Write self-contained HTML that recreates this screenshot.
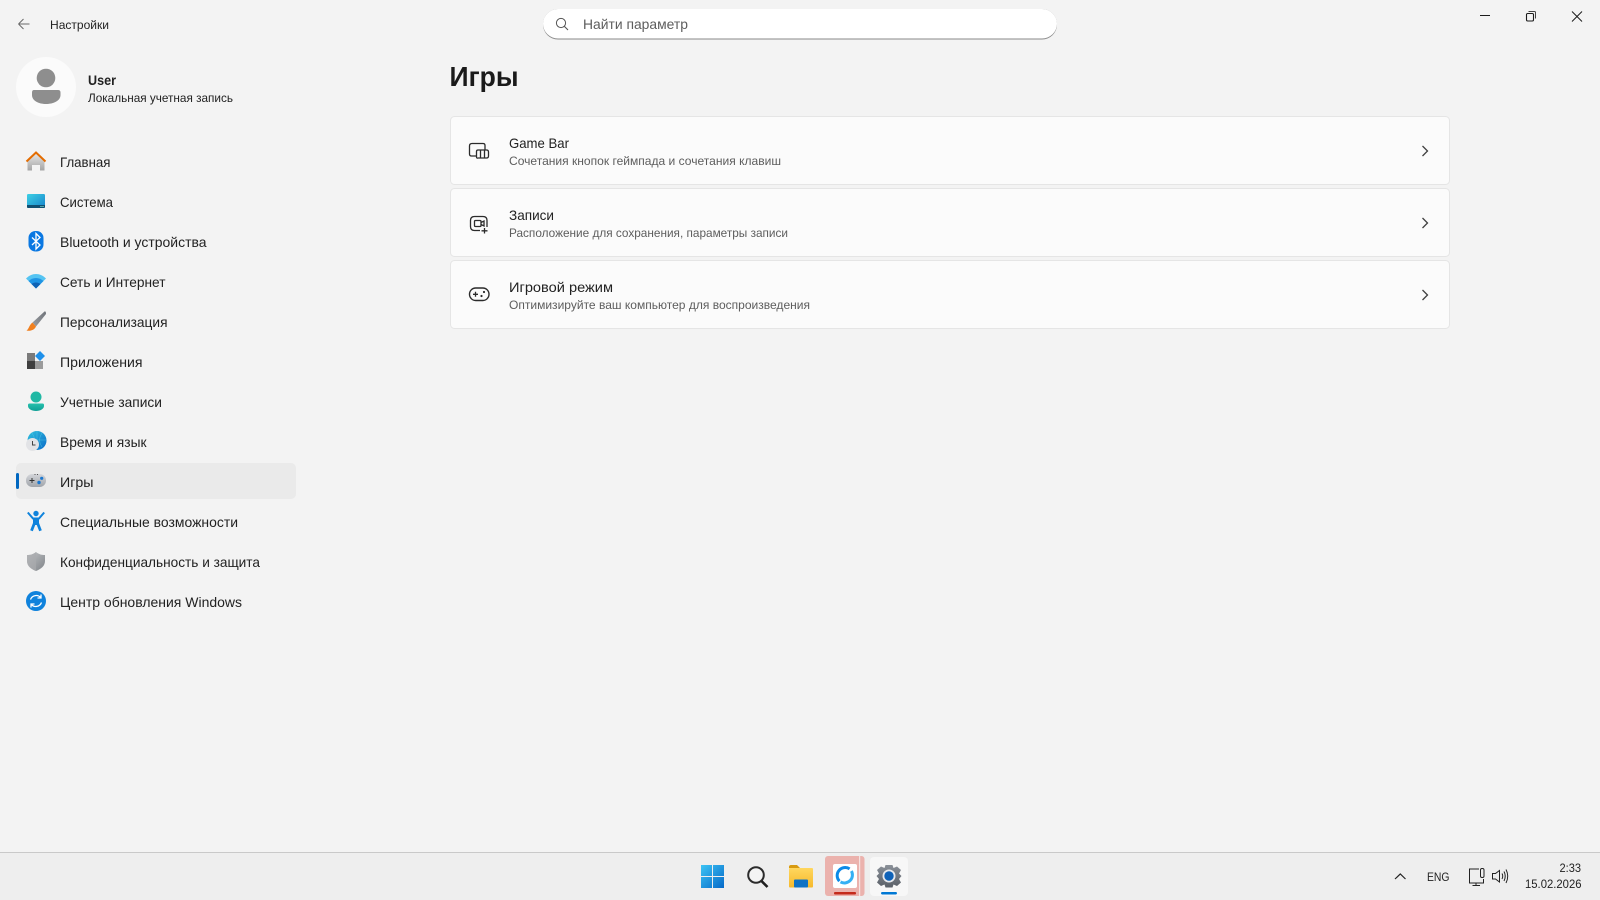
<!DOCTYPE html>
<html lang="ru"><head><meta charset="utf-8"><title>Параметры</title>
<style>html,body{margin:0;padding:0;background:#f3f3f3;overflow:hidden}svg{display:block}text{font-family:"Liberation Sans",sans-serif;fill:#222}.n{font-size:14px}.s{font-size:12px}.g{fill:#5d5d5d}</style></head>
<body>
<svg width="1600" height="900" viewBox="0 0 1600 900" xmlns="http://www.w3.org/2000/svg">
<defs>
<linearGradient id="wall" x1="0" y1="0" x2="0" y2="1"><stop offset="0" stop-color="#e8e8e8"/><stop offset="1" stop-color="#a4a4a4"/></linearGradient>
<linearGradient id="sys" x1="0" y1="0" x2="1" y2="1"><stop offset="0" stop-color="#3dd0e4"/><stop offset="1" stop-color="#1684cc"/></linearGradient>
<linearGradient id="tl" x1="0" y1="0" x2="0" y2="1"><stop offset="0" stop-color="#26c0ac"/><stop offset="1" stop-color="#0f9f96"/></linearGradient>
<linearGradient id="gl" x1="0" y1="0" x2="1" y2="1"><stop offset="0" stop-color="#30c0de"/><stop offset="1" stop-color="#0a6cc8"/></linearGradient>
<linearGradient id="gp" x1="0" y1="0" x2="0" y2="1"><stop offset="0" stop-color="#d4d6da"/><stop offset="1" stop-color="#a0a4aa"/></linearGradient>
<linearGradient id="sh" x1="0" y1="0" x2="1" y2="1"><stop offset="0" stop-color="#c4c6c8"/><stop offset="1" stop-color="#7f8388"/></linearGradient>
<linearGradient id="win" x1="0" y1="0" x2="1" y2="1"><stop offset="0" stop-color="#3cc4f4"/><stop offset="1" stop-color="#0669c8"/></linearGradient>
<linearGradient id="fold" x1="0" y1="0" x2="0" y2="1"><stop offset="0" stop-color="#ffd75e"/><stop offset="1" stop-color="#f6b92c"/></linearGradient>
<linearGradient id="gear" x1="0" y1="0" x2="0" y2="1"><stop offset="0" stop-color="#8a9098"/><stop offset="1" stop-color="#5a6068"/></linearGradient>
<linearGradient id="brush" x1="0" y1="1" x2="1" y2="0"><stop offset="0" stop-color="#9a9da2"/><stop offset="1" stop-color="#6f7379"/></linearGradient>
</defs>
<rect width="1600" height="900" fill="#f3f3f3"/>

<!-- title bar -->
<path d="M18.500 24H29.500M18.500 24L23.500 19M18.500 24L23.500 29" fill="none" stroke="#6a6a6a" stroke-width="1"/>
<text class="s" x="50" y="29" textLength="59" lengthAdjust="spacingAndGlyphs">Настройки</text>
<path d="M1480 15.500H1490" stroke="#1b1b1b" stroke-width="1"/>
<rect x="1526.500" y="13.500" width="7" height="7.500" rx="1.200" fill="none" stroke="#1b1b1b" stroke-width="1.100"/>
<path d="M1528.500 11.500H1534.500Q1535.500 11.500 1535.500 12.500V18.500" fill="none" stroke="#444" stroke-width="1"/>
<path d="M1572 11.500L1582 21.500M1582 11.500L1572 21.500" stroke="#1b1b1b" stroke-width="1"/>

<!-- search -->
<rect x="543" y="9" width="514" height="30.500" rx="15" fill="#8a8a8a"/>
<rect x="543" y="9" width="514" height="29.500" rx="15" fill="#fff"/>
<circle cx="561" cy="23" r="4.600" fill="none" stroke="#555" stroke-width="1"/>
<path d="M564.400 26.400L568 30" stroke="#555" stroke-width="1.100"/>
<text class="n g" x="583" y="29" textLength="105" lengthAdjust="spacingAndGlyphs">Найти параметр</text>

<!-- user -->
<circle cx="46" cy="87" r="30" fill="#fbfbfb"/>
<circle cx="46" cy="78" r="9.300" fill="#8e8e8e"/>
<path d="M34 90H58Q60.500 90 60.500 92.500V95C60.500 101 53 104 46 104C39 104 32 101 32 95V92.500Q32 90 34 90Z" fill="#8e8e8e"/>
<text class="n" x="88" y="85" font-weight="700" textLength="28" lengthAdjust="spacingAndGlyphs" style="font-size:13.500px">User</text>
<text class="s" x="88" y="102" textLength="145" lengthAdjust="spacingAndGlyphs">Локальная учетная запись</text>

<!-- selected -->
<rect x="16" y="463" width="280" height="36" rx="5" fill="#eaeaea"/>
<rect x="16" y="473" width="3" height="16" rx="1.500" fill="#0067c0"/>

<!-- nav labels -->
<text class="n" x="60" y="167" textLength="50.500" lengthAdjust="spacingAndGlyphs">Главная</text>
<text class="n" x="60" y="207" textLength="53" lengthAdjust="spacingAndGlyphs">Система</text>
<text class="n" x="60" y="247" textLength="146.500" lengthAdjust="spacingAndGlyphs">Bluetooth и устройства</text>
<text class="n" x="60" y="287" textLength="105.500" lengthAdjust="spacingAndGlyphs">Сеть и Интернет</text>
<text class="n" x="60" y="327" textLength="107.500" lengthAdjust="spacingAndGlyphs">Персонализация</text>
<text class="n" x="60" y="367" textLength="82.500" lengthAdjust="spacingAndGlyphs">Приложения</text>
<text class="n" x="60" y="407" textLength="102" lengthAdjust="spacingAndGlyphs">Учетные записи</text>
<text class="n" x="60" y="447" textLength="86.500" lengthAdjust="spacingAndGlyphs">Время и язык</text>
<text class="n" x="60" y="487" textLength="33.500" lengthAdjust="spacingAndGlyphs">Игры</text>
<text class="n" x="60" y="527" textLength="178" lengthAdjust="spacingAndGlyphs">Специальные возможности</text>
<text class="n" x="60" y="567" textLength="200" lengthAdjust="spacingAndGlyphs">Конфиденциальность и защита</text>
<text class="n" x="60" y="607" textLength="182" lengthAdjust="spacingAndGlyphs">Центр обновления Windows</text>

<!-- home -->
<path d="M27.500 161L36 153L44.500 161V170.500H40V165H32V170.500H27.500Z" fill="url(#wall)"/>
<path d="M26.500 161.500L36 152.500L45.500 161.500" fill="none" stroke="#e46c00" stroke-width="2"/>
<!-- system -->
<rect x="27" y="194" width="18" height="14" rx="1.200" fill="url(#sys)"/>
<path d="M27 205H45V207Q45 208 44 208H28Q27 208 27 207Z" fill="#104f72"/>
<rect x="40.500" y="206" width="1" height="1" fill="#9fd"/><rect x="42.500" y="206" width="1" height="1" fill="#9fd"/>
<!-- bluetooth -->
<rect x="28.500" y="231" width="15" height="20.500" rx="7" fill="#0a78e2"/>
<path d="M32 237.500L40 245L36 249V233.500L40 237.500L32 245" fill="none" stroke="#fff" stroke-width="1.300"/>
<!-- wifi -->
<path d="M26 278.500C32 272.500 40 272.500 46 278.500L36 288.500Z" fill="#55c4f2"/>
<path d="M28.500 281C33 277 39 277 43.500 281L36 288.500Z" fill="#1f94e4"/>
<path d="M31.500 284C34 282 38 282 40.500 284L36 288.500Z" fill="#0f62b4"/>
<!-- brush -->
<path d="M44.500 311.500L32.500 322.500L36 326.500L46 314Q46 311 44.500 311.500Z" fill="url(#brush)"/>
<path d="M32.500 322.500L36 326.500C34.500 330 30 331.500 26.500 330.500C29 329 29 325 32.500 322.500Z" fill="#f08020"/>
<!-- apps -->
<rect x="27" y="353" width="8" height="8" fill="#7a7a7a"/>
<rect x="27" y="361" width="8" height="8" fill="#3f3f3f"/>
<rect x="35" y="361" width="8" height="8" fill="#9b9b9b"/>
<path d="M40 351L45 356L40 361L35 356Z" fill="#1e90ea"/>
<!-- accounts -->
<circle cx="36" cy="397" r="5.500" fill="#20b8a4"/>
<path d="M29.500 403.500H42.500Q44 403.500 44 405V406C44 409 40 411 36 411C32 411 28 409 28 406V405Q28 403.500 29.500 403.500Z" fill="url(#tl)"/>
<!-- time -->
<circle cx="37" cy="440.500" r="9.500" fill="url(#gl)"/>
<path d="M37 431V449M28 440H46M32 433Q37 440 32 447M42 433Q37 440 42 447" fill="none" stroke="#5fd0ea" stroke-width=".5" opacity=".7"/>
<circle cx="32.500" cy="444.500" r="6.500" fill="#e2e3e6"/>
<path d="M32.500 441V445H35.500" fill="none" stroke="#444" stroke-width="1"/>
<!-- games -->
<rect x="26" y="474" width="20" height="13" rx="6.300" fill="url(#gp)"/>
<path d="M29.500 480.500H34.500M32 478V483" stroke="#333" stroke-width="1"/>
<circle cx="41.700" cy="478.300" r="1.600" fill="#1b78d0"/><circle cx="39" cy="482.500" r="1.700" fill="#1b78d0"/>
<path d="M34.500 474.500h1M37 474.500h1" stroke="#555" stroke-width="1"/>
<!-- accessibility -->
<circle cx="36" cy="513.500" r="2.700" fill="#0f83dc"/>
<path d="M27.800 512.500L33 518.500H39L44.200 512.500" fill="none" stroke="#0f83dc" stroke-width="2"/>
<rect x="33" y="518" width="6" height="7" fill="#0f83dc"/>
<path d="M34.300 523.500L31.500 530.800M37.700 523.500L40.500 530.800" fill="none" stroke="#0f83dc" stroke-width="2.800"/>
<!-- shield -->
<path d="M36 552C39 554.500 42 555 45 555V561C45 566 41 569 36 571C31 569 27 566 27 561V555C30 555 33 554.500 36 552Z" fill="url(#sh)"/>
<path d="M36 552C33 554.500 30 555 27 555V561C27 566 31 569 36 571Z" fill="#a9abae" opacity=".7"/>
<!-- update -->
<circle cx="36" cy="601" r="10" fill="#0f82dc"/>
<path d="M30.500 599.500A6 6 0 0 1 41 598M41 594.500V598H37.500M41.500 602.500A6 6 0 0 1 31 604M31 607.500V604H34.500" fill="none" stroke="#fff" stroke-width="1.300"/>

<!-- heading -->
<text x="449.500" y="86" font-size="28" font-weight="700" textLength="69" lengthAdjust="spacingAndGlyphs" style="fill:#1a1a1a">Игры</text>

<!-- cards -->
<rect x="450.500" y="116.500" width="999" height="68" rx="4" fill="#fbfbfb" stroke="#e5e5e5"/>
<rect x="450.500" y="188.500" width="999" height="68" rx="4" fill="#fbfbfb" stroke="#e5e5e5"/>
<rect x="450.500" y="260.500" width="999" height="68" rx="4" fill="#fbfbfb" stroke="#e5e5e5"/>
<text class="n" x="509" y="148" textLength="60" lengthAdjust="spacingAndGlyphs">Game Bar</text>
<text class="s g" x="509" y="165" textLength="272" lengthAdjust="spacingAndGlyphs">Сочетания кнопок геймпада и сочетания клавиш</text>
<text class="n" x="509" y="220" textLength="45" lengthAdjust="spacingAndGlyphs">Записи</text>
<text class="s g" x="509" y="237" textLength="279" lengthAdjust="spacingAndGlyphs">Расположение для сохранения, параметры записи</text>
<text class="n" x="509" y="292" textLength="104" lengthAdjust="spacingAndGlyphs">Игровой режим</text>
<text class="s g" x="509" y="309" textLength="301" lengthAdjust="spacingAndGlyphs">Оптимизируйте ваш компьютер для воспроизведения</text>

<g fill="none" stroke="#2b2b2b" stroke-width="1.300">
<path d="M476 156H471.500Q469.500 156 469.500 154V146Q469.500 143.500 472 143.500H483Q485 143.500 485 145.500V149.500"/>
<path d="M476.500 151.500Q476.500 150 478 150H486.500Q488.500 150 488.500 152V156Q488.500 158 486.500 158H478Q476.500 158.500 476.500 157ZM480.500 150V158.500M484.500 150V158"/>
<path d="M480 230.500H474.500Q470.500 230.500 470.500 226.500V220.500Q470.500 216.500 474.500 216.500H483Q487 216.500 487 220.500V227"/>
<rect x="474.500" y="220.500" width="6.500" height="6" rx="1"/>
<path d="M481 222.500L484 221V226L481 224.500M484.500 228V233.500M481.500 230.800H487.500"/>
<rect x="469.500" y="288" width="19.500" height="12.500" rx="6.200" stroke-width="1.400"/>
<path d="M473 294.300H478M475.500 291.800V296.800"/>
</g>
<circle cx="484" cy="292" r="1.100" fill="#2b2b2b"/><circle cx="481.500" cy="296" r="1.100" fill="#2b2b2b"/>

<path d="M1422.500 146L1427.500 151L1422.500 156M1422.500 218L1427.500 223L1422.500 228M1422.500 290L1427.500 295L1422.500 300" fill="none" stroke="#404040" stroke-width="1.300"/>

<!-- taskbar -->
<rect x="0" y="852" width="1600" height="48" fill="#eeeeee"/>
<rect x="0" y="852" width="1600" height="1" fill="#c9c9c9"/>

<!-- windows logo -->
<path d="M701 865H712V876H701ZM713 865H724V876H713ZM701 877H712V888H701ZM713 877H724V888H713Z" fill="url(#win)"/>
<!-- search -->
<circle cx="756" cy="875" r="7.800" fill="#f4f4f4" stroke="#2b2b2b" stroke-width="2"/>
<path d="M761.500 881L767.500 887" stroke="#1f1f1f" stroke-width="2.600"/>
<!-- folder -->
<path d="M789 867Q789 865 791 865H797L800 868H789Z" fill="#d89a10"/>
<rect x="789" y="868" width="24" height="19.500" rx="1" fill="url(#fold)"/>
<rect x="794" y="879.500" width="14" height="8" rx="1" fill="#0f72c4"/>
<!-- red app -->
<rect x="825" y="856" width="39.500" height="40" rx="3" fill="#ebb2ad"/>
<rect x="859" y="856" width="1.200" height="40" fill="#f6e2e0"/>
<rect x="833" y="864" width="24" height="24" rx="2" fill="#fff"/>
<path d="M839.400 881.100A8 8 0 0 1 849.600 868.900" fill="none" stroke="#0d8ae8" stroke-width="3"/>
<path d="M851.400 871A8 8 0 0 1 840.500 881.900" fill="none" stroke="#36b0f4" stroke-width="3"/>
<rect x="834" y="892" width="22" height="2.500" rx="1" fill="#c42b1c"/>
<!-- settings -->
<rect x="870" y="857" width="38" height="39" rx="4" fill="#f7f7f7"/>
<path d="M885.500 865H892.500L893.500 868L897 866.500L901 870L899 873.500L901.500 876L899 879L901 882.500L897 886L893.500 884.500L892.500 887.500H885.500L884.500 884.500L881 886L877 882.500L879 879L876.500 876L879 873.500L877 870L881 866.500L884.500 868Z" fill="url(#gear)"/>
<circle cx="889" cy="876" r="6.500" fill="#e8eaee"/>
<circle cx="889" cy="876" r="4.700" fill="#0f62b8"/>
<rect x="881" y="892" width="16" height="2.500" rx="1.200" fill="#0078d4"/>

<!-- tray -->
<path d="M1395 879L1400.300 874L1405.500 879" fill="none" stroke="#222" stroke-width="1.200"/>
<text class="s" x="1427" y="881" textLength="22.500" lengthAdjust="spacingAndGlyphs">ENG</text>
<g fill="none" stroke="#222" stroke-width="1">
<path d="M1479 869H1469.500V883H1483.500V879"/>
<path d="M1476 883V885.500M1472.500 885.500H1480"/>
<rect x="1480.500" y="868.500" width="3.500" height="9" rx="1.500"/>
<path d="M1492.500 873.500H1495.500L1499.500 870.500V882L1495.500 879H1492.500Z"/>
<path d="M1502 873.500Q1503.500 876.200 1502 879M1504 871.500Q1506.500 876.200 1504 881M1506 869.500Q1509.500 876.200 1506 883"/>
</g>
<text class="s" x="1581" y="872" text-anchor="end" textLength="21.500" lengthAdjust="spacingAndGlyphs">2:33</text>
<text class="s" x="1525" y="888" textLength="56.500" lengthAdjust="spacingAndGlyphs">15.02.2026</text>
</svg>
</body></html>
